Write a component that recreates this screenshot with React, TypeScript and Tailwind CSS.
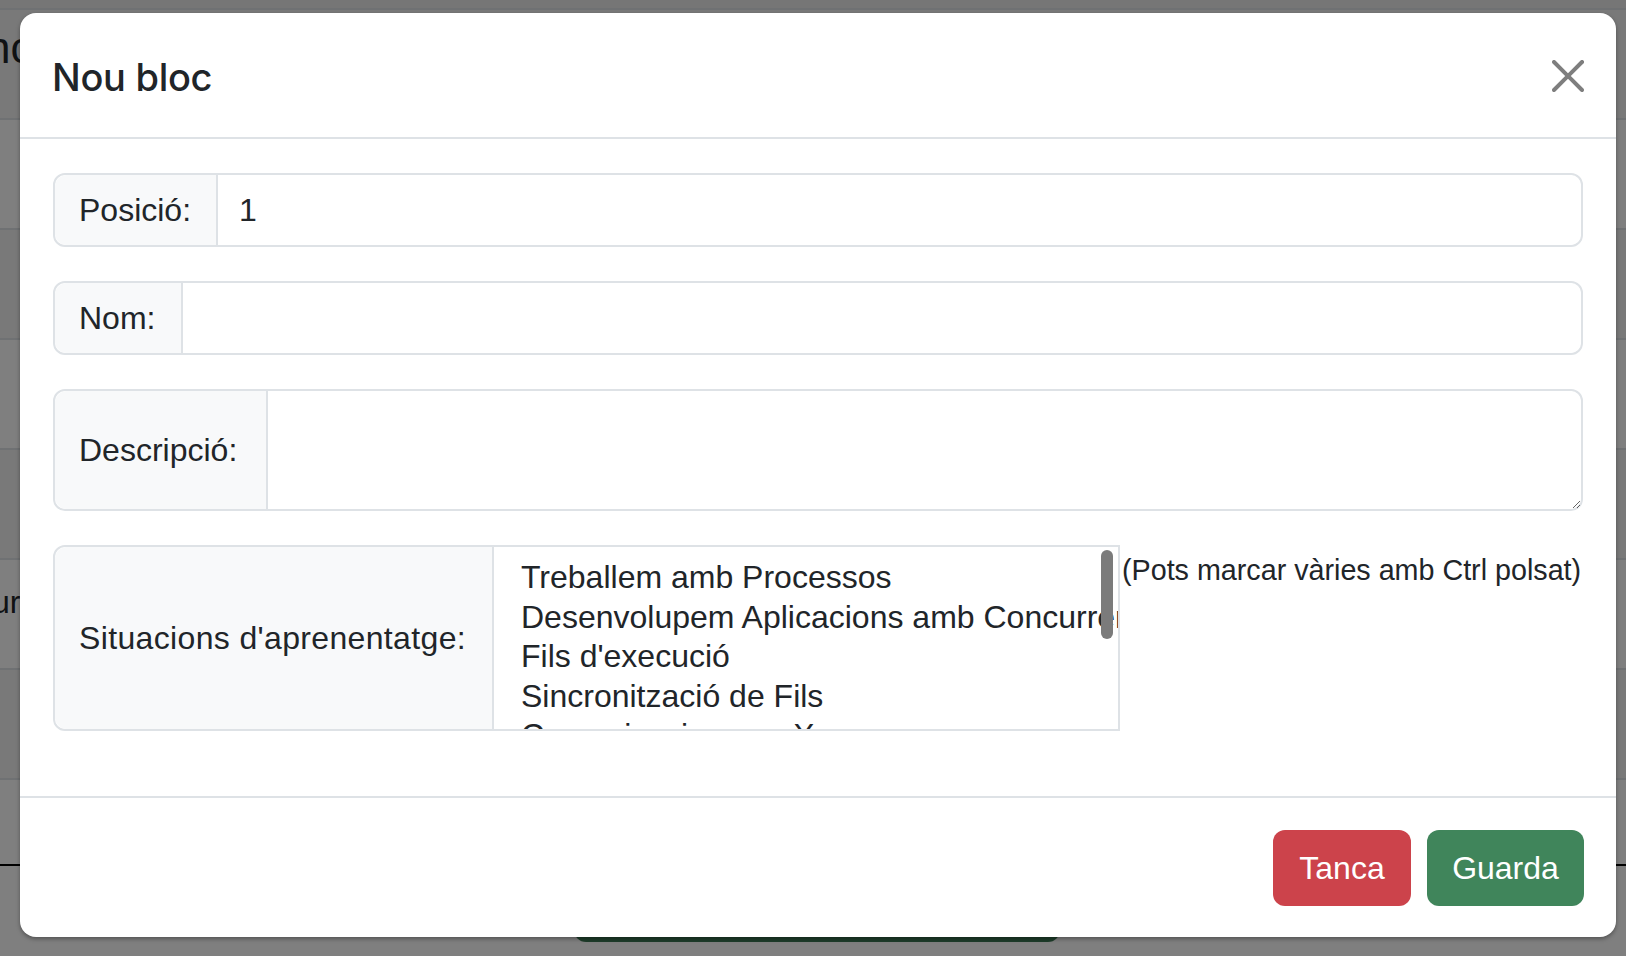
import React from "react";

const options = [
  "Treballem amb Processos",
  "Desenvolupem Aplicacions amb Concurrència",
  "Fils d'execució",
  "Sincronització de Fils",
  "Comunicacions en Xarxa",
];

function BackgroundPage() {
  const rows = [0, 1, 2, 3, 4, 5, 6];
  return (
    <div className="flex flex-col">
      <div className="h-[10px] border-b-2 border-[#dee2e6] bg-[#ececec]" />
      {rows.map((i) => (
        <div
          key={i}
          className={
            i % 2 === 0
              ? "h-[110px] border-b-2 border-[#dee2e6] bg-black/5"
              : "h-[110px] border-b-2 border-[#dee2e6]"
          }
        >
          {i === 0 && <div className="ml-[-14px] pt-[16px] text-[44px] leading-none">nc</div>}
          {i === 5 && <div className="ml-[-8px] pt-[26px] text-[32px] leading-none">ur</div>}
        </div>
      ))}
      <div className="h-[86px] border-b-2 border-black" />
      <div className="pt-[16px]">
        <div className="ml-[574px] h-[60px] w-[486px] rounded-[12px] bg-[#3d7b55]" />
      </div>
    </div>
  );
}

function CloseIcon() {
  return (
    <svg width="32" height="32" viewBox="0 0 16 16" className="opacity-50">
      <path
        fill="#000"
        d="M.293.293a1 1 0 0 1 1.414 0L8 6.586 14.293.293a1 1 0 1 1 1.414 1.414L9.414 8l6.293 6.293a1 1 0 0 1-1.414 1.414L8 9.414l-6.293 6.293a1 1 0 0 1-1.414-1.414L6.586 8 .293 1.707a1 1 0 0 1 0-1.414z"
      />
    </svg>
  );
}

function Addon({ label, width }: { label: string; width: string }) {
  return (
    <div
      className={`flex shrink-0 items-center rounded-l-[12px] border-r-2 border-[#dee2e6] bg-[#f8f9fa] pl-[24px] ${width}`}
    >
      {label}
    </div>
  );
}

export default function App() {
  return (
    <div className="relative h-[956px] w-[1626px] overflow-hidden bg-white font-['Liberation_Sans',Arial,sans-serif] text-[#212529]">
      <BackgroundPage />

      {/* Backdrop + modal */}
      <div className="absolute inset-0 bg-black/50">
        <div className="ml-[20px] mt-[13px] w-[1596px] rounded-[16px] bg-white shadow-[0_2px_4px_rgba(0,0,0,0.35)]">
          {/* Header */}
          <div className="flex h-[126px] items-center justify-between border-b-2 border-[#dee2e6] pl-[32px] pr-[32px]">
            <h5 className="mt-[4px] font-['Inter',sans-serif] text-[38px] font-medium leading-[60px] tracking-[-0.3px]">
              Nou bloc
            </h5>
            <button className="mt-[1px]">
              <CloseIcon />
            </button>
          </div>

          {/* Body */}
          <div className="flex flex-col gap-[34px] px-[33px] pb-[65px] pt-[34px] text-[32px]">
            <div className="flex h-[74px] rounded-[12px] border-2 border-[#dee2e6]">
              <Addon label="Posició:" width="w-[163px]" />
              <input
                defaultValue="1"
                className="min-w-0 flex-1 rounded-r-[12px] bg-white pl-[21px] outline-none"
              />
            </div>

            <div className="flex h-[74px] rounded-[12px] border-2 border-[#dee2e6]">
              <Addon label="Nom:" width="w-[128px]" />
              <input className="min-w-0 flex-1 rounded-r-[12px] bg-white pl-[21px] outline-none" />
            </div>

            <div className="flex h-[122px] rounded-[12px] border-2 border-[#dee2e6]">
              <Addon label="Descripció:" width="w-[213px]" />
              <textarea className="h-full min-w-0 flex-1 resize-y rounded-r-[12px] bg-white pl-[21px] pt-[10px] outline-none" />
            </div>

            <div className="flex items-start">
              <div className="flex h-[186px] w-[1067px] rounded-l-[12px] border-2 border-[#dee2e6]">
                <div className="flex w-[439px] shrink-0 items-center rounded-l-[12px] border-r-2 border-[#dee2e6] bg-[#f8f9fa] pl-[24px] tracking-[0.35px]">
                  Situacions d'aprenentatge:
                </div>
                <div className="relative min-w-0 flex-1 overflow-hidden bg-white pl-[27px] pt-[11px]">
                  {options.map((o) => (
                    <div key={o} className="whitespace-nowrap leading-[39.5px]">
                      {o}
                    </div>
                  ))}
                  <div className="absolute right-[5px] top-[3px] h-[89px] w-[12px] rounded-full bg-[#7b7b7b]" />
                </div>
              </div>
              <div className="ml-[2px] whitespace-nowrap pt-[4px] text-[28.7px] leading-[43px]">
                (Pots marcar vàries amb Ctrl polsat)
              </div>
            </div>
          </div>

          {/* Footer */}
          <div className="flex justify-end gap-[16px] border-t-2 border-[#dee2e6] pb-[31px] pl-[32px] pr-[32px] pt-[32px] text-[32px] text-white">
            <button className="h-[76px] w-[138px] rounded-[12px] bg-[#cc434b]">Tanca</button>
            <button className="h-[76px] w-[157px] rounded-[12px] bg-[#40855b]">Guarda</button>
          </div>
        </div>
      </div>
    </div>
  );
}
